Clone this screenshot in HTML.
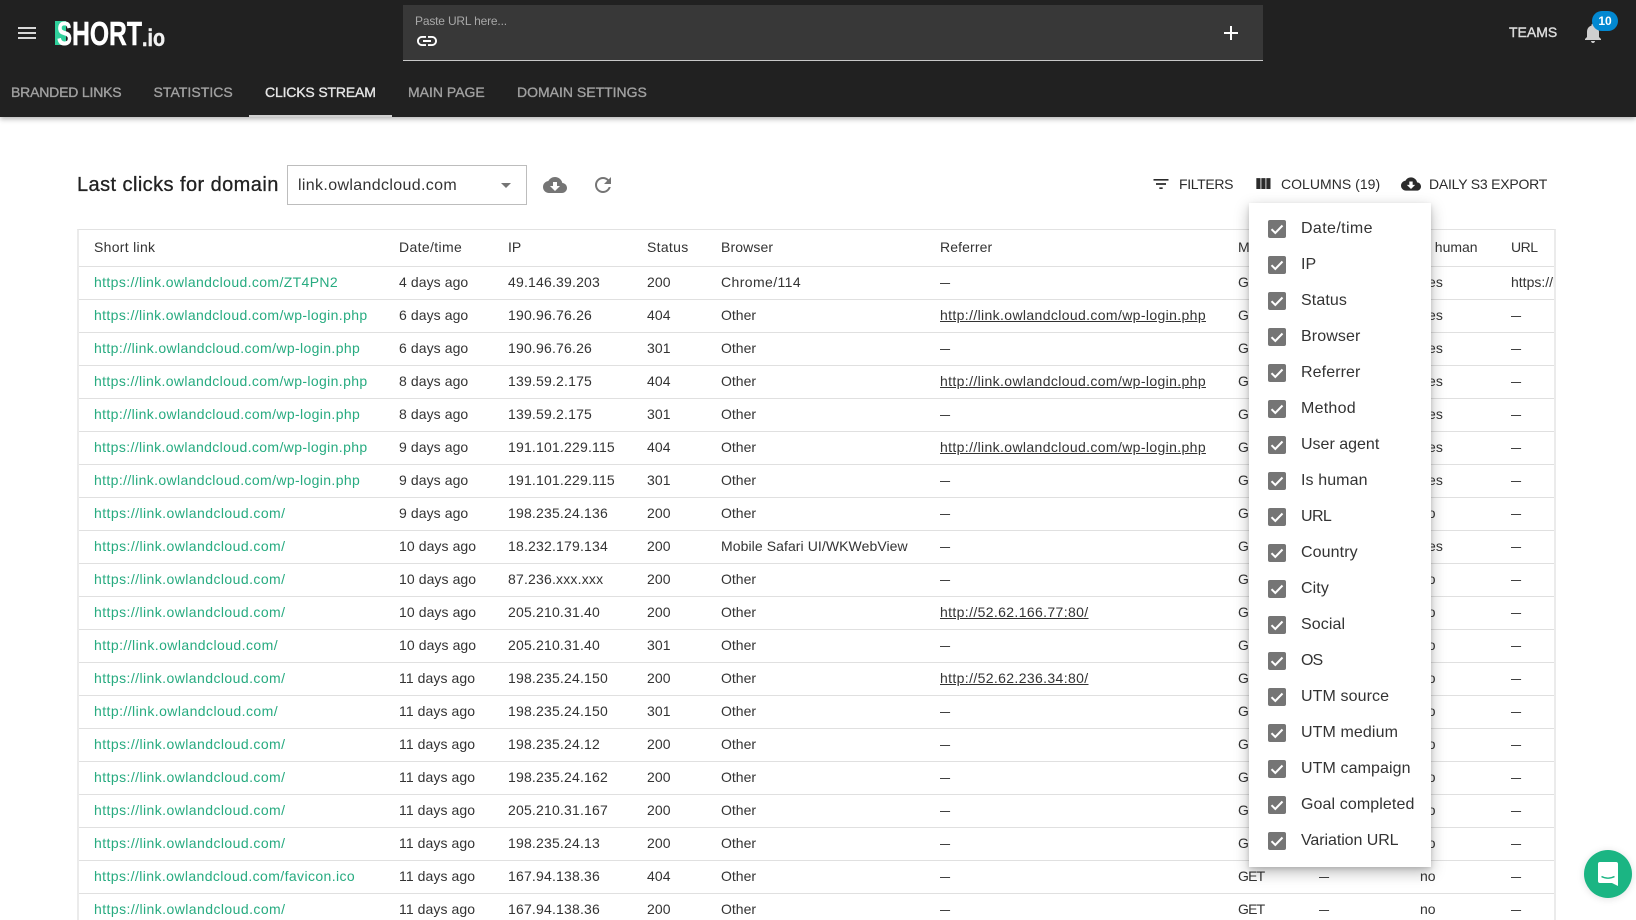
<!DOCTYPE html>
<html><head><meta charset="utf-8"><title>Clicks stream</title>
<style>
html,body{margin:0;padding:0;width:1636px;height:915px;overflow:hidden;background:#fff;font-family:"Liberation Sans",Arial,sans-serif;color:#333}
.abs,.tab,.tb,.cb,.lb{position:absolute}
#head{position:absolute;left:0;top:0;width:1636px;height:117px;background:#212121;box-shadow:0 2px 5px rgba(0,0,0,.3);z-index:3}
.tab{top:84px;font-size:14px;line-height:16px;font-weight:400;color:#a0a0a0;white-space:nowrap;-webkit-text-stroke:.35px #a0a0a0}
#search{position:absolute;left:403px;top:5px;width:860px;height:55px;background:#383838;border-bottom:1px solid #c8c8c8}
.tb{font-size:14px;line-height:16px;top:176px;white-space:nowrap;color:#2b2b2b}
#wrap{position:absolute;left:77px;top:229px;width:1475px;height:690px;border-style:solid;border-color:#e2e2e2 #ebebeb;overflow:hidden;border-width:1.5px 2px 0 2px}
table{border-collapse:collapse;table-layout:fixed;width:1477px;margin-left:-2px;font-size:14px;color:#333}
td,th{padding:0 0 2px;height:30px;border-bottom:1px solid #e0e0e0;text-align:left;font-weight:400;white-space:nowrap;overflow:hidden;line-height:16px;box-sizing:content-box}
th{height:33.5px}
td:first-child,th:first-child{padding-left:17px}
td:first-child{color:#27ab80;letter-spacing:.37px}
td.r:first-child{letter-spacing:.43px}
td:nth-child(2){letter-spacing:.08px}
td:nth-child(3){letter-spacing:.19px}
td:nth-child(4){letter-spacing:.1px}
td:nth-child(7){letter-spacing:-.8px}
th:nth-child(1){letter-spacing:.3px}
th:nth-child(2){letter-spacing:.36px}
th:nth-child(4){letter-spacing:.3px}
th:nth-child(5),th:nth-child(6){letter-spacing:.12px}
th:nth-child(10){letter-spacing:-.5px}
u{letter-spacing:.365px}
i{font-style:normal;display:inline-block;transform:scaleX(.72);transform-origin:0 50%;letter-spacing:0}
#dd{position:absolute;left:1249px;top:203px;width:182px;height:664px;background:#fff;box-shadow:0 5px 14px rgba(0,0,0,.28),0 2px 4px rgba(0,0,0,.12);z-index:2}
.cb{left:19px;width:18px;height:18px;background:#757575;border-radius:2px}
.cb svg{display:block}
.lb{left:52px;font-size:16px;line-height:20px;white-space:nowrap;color:#333;letter-spacing:.1px}
</style></head><body>
<div id="head">
<svg class="abs" style="left:15px;top:21px" width="24" height="24" viewBox="0 0 24 24"><path fill="#d8d8d8" d="M3 18h18v-2H3v2zm0-5h18v-2H3v2zm0-7v2h18V6H3z"/></svg>
<svg class="abs" style="left:50px;top:15px" width="125" height="36" viewBox="0 0 125 36">
<rect x="5" y="6" width="11" height="24" fill="#2fd09b"/>
<text x="7" y="30" font-family="Liberation Sans" font-weight="700" font-size="33" fill="#fff" stroke="#fff" stroke-width=".4" textLength="15" lengthAdjust="spacingAndGlyphs">S</text>
<text x="22" y="30" font-family="Liberation Sans" font-weight="700" font-size="33" fill="#fff" stroke="#fff" stroke-width=".5" textLength="70" lengthAdjust="spacingAndGlyphs">HORT</text>
<text x="92" y="31" font-family="Liberation Sans" font-weight="700" font-size="24" fill="#f0f0f0" stroke="#f0f0f0" stroke-width=".4" textLength="23" lengthAdjust="spacingAndGlyphs">.io</text>
</svg>
<div id="search"></div>
<div class="abs" style="left:415px;top:14px;font-size:12px;line-height:14px;color:#a8a8a8;letter-spacing:-.18px">Paste URL here...</div>
<svg class="abs" style="left:415px;top:29px" width="24" height="24" viewBox="0 0 24 24"><path fill="#fff" d="M3.9 12c0-1.71 1.39-3.1 3.1-3.1h4V7H7c-2.76 0-5 2.24-5 5s2.24 5 5 5h4v-1.9H7c-1.71 0-3.1-1.39-3.1-3.1zM8 13h8v-2H8v2zm9-6h-4v1.9h4c1.71 0 3.1 1.39 3.1 3.1s-1.39 3.1-3.1 3.1h-4V17h4c2.76 0 5-2.24 5-5s-2.24-5-5-5z"/></svg>
<svg class="abs" style="left:1219px;top:21px" width="24" height="24" viewBox="0 0 24 24"><path fill="#fff" d="M19 13h-6v6h-2v-6H5v-2h6V5h2v6h6v2z"/></svg>
<div class="tab" style="left:11px;letter-spacing:-.18px">BRANDED LINKS</div>
<div class="tab" style="left:153.5px;letter-spacing:.05px">STATISTICS</div>
<div class="tab" style="left:265px;color:#e6e6e6;-webkit-text-stroke:.35px #e6e6e6;letter-spacing:-.16px">CLICKS STREAM</div>
<div class="tab" style="left:408px">MAIN PAGE</div>
<div class="tab" style="left:517px">DOMAIN SETTINGS</div>
<div class="abs" style="left:249px;top:114.5px;width:143px;height:2.5px;background:#d0d0d0"></div>
<div class="tab" style="left:1509px;top:24px;color:#dcdcdc;-webkit-text-stroke:.4px #dcdcdc">TEAMS</div>
<svg class="abs" style="left:1581px;top:21px" width="24" height="24" viewBox="0 0 24 24"><path fill="#cfcfcf" d="M12 22c1.1 0 2-.9 2-2h-4c0 1.1.89 2 2 2zm6-6v-5c0-3.07-1.64-5.64-4.5-6.32V4c0-.83-.67-1.5-1.5-1.5s-1.5.67-1.5 1.5v.68C7.63 5.36 6 7.92 6 11v5l-2 2v1h16v-1l-2-2z"/></svg>
<div class="abs" style="left:1592px;top:11px;width:26px;height:20px;border-radius:10px;background:#0288d1;color:#fff;font-size:12px;font-weight:700;line-height:20px;text-align:center">10</div>
</div>

<div class="abs" style="left:77px;top:173px;font-size:20px;line-height:24px;color:#222;white-space:nowrap;letter-spacing:.43px;-webkit-text-stroke:.3px #222">Last clicks for domain</div>
<div class="abs" style="left:287px;top:165px;width:238px;height:38px;border:1px solid #bdbdbd"></div>
<div class="abs" style="left:298px;top:177px;font-size:16px;line-height:18px;color:#333;letter-spacing:.35px">link.owlandcloud.com</div>
<div class="abs" style="left:501px;top:183px;width:0;height:0;border-left:5px solid transparent;border-right:5px solid transparent;border-top:5px solid #757575"></div>
<svg class="abs" style="left:543px;top:173px" width="24" height="24" viewBox="0 0 24 24"><path fill="#757575" d="M19.35 10.04C18.67 6.59 15.64 4 12 4 9.11 4 6.6 5.64 5.35 8.04 2.34 8.36 0 10.91 0 14c0 3.31 2.69 6 6 6h13c2.76 0 5-2.24 5-5 0-2.64-2.05-4.78-4.65-4.96zM17 13l-5 5-5-5h3V9h4v4h3z"/></svg>
<svg class="abs" style="left:591px;top:173px" width="24" height="24" viewBox="0 0 24 24"><path fill="#757575" d="M17.65 6.35C16.2 4.9 14.21 4 12 4c-4.42 0-7.99 3.58-7.99 8s3.57 8 7.99 8c3.73 0 6.84-2.55 7.73-6h-2.08c-.82 2.33-3.04 4-5.65 4-3.31 0-6-2.69-6-6s2.69-6 6-6c1.66 0 3.14.69 4.22 1.78L13 11h7V4l-2.35 2.35z"/></svg>

<svg class="abs" style="left:1151px;top:174px" width="20" height="20" viewBox="0 0 24 24"><path fill="#2b2b2b" d="M10 18h4v-2h-4v2zM3 6v2h18V6H3zm3 7h12v-2H6v2z"/></svg>
<div class="tb" style="left:1179px;letter-spacing:-.35px">FILTERS</div>
<svg class="abs" style="left:1253px;top:174px" width="20" height="20" viewBox="0 0 24 24"><path fill="#2b2b2b" d="M10 18h5V5h-5v13zm-6 0h5V5H4v13zM16 5v13h5V5h-5z"/></svg>
<div class="tb" style="left:1281px;letter-spacing:.03px">COLUMNS (19)</div>
<svg class="abs" style="left:1401px;top:174px" width="20" height="20" viewBox="0 0 24 24"><path fill="#2b2b2b" d="M19.35 10.04C18.67 6.59 15.64 4 12 4 9.11 4 6.6 5.64 5.35 8.04 2.34 8.36 0 10.91 0 14c0 3.31 2.69 6 6 6h13c2.76 0 5-2.24 5-5 0-2.64-2.05-4.78-4.65-4.96zM17 13l-5 5-5-5h3V9h4v4h3z"/></svg>
<div class="tb" style="left:1429px;letter-spacing:-.22px">DAILY S3 EXPORT</div>

<div id="wrap"><table>
<colgroup><col style="width:322px"><col style="width:109px"><col style="width:139px"><col style="width:74px"><col style="width:219px"><col style="width:298px"><col style="width:81px"><col style="width:101px"><col style="width:91px"><col style="width:43px"></colgroup>
<tr><th>Short link</th><th>Date/time</th><th>IP</th><th>Status</th><th>Browser</th><th>Referrer</th><th>Method</th><th>User agent</th><th>Is human</th><th>URL</th></tr>
<tr><td>https://link.owlandcloud.com/ZT4PN2</td><td>4 days ago</td><td>49.146.39.203</td><td>200</td><td style="letter-spacing:.4px">Chrome/114</td><td><i>—</i></td><td>GET</td><td><i>—</i></td><td>Yes</td><td>https://link.owlandcloud.com</td></tr>
<tr><td>https://link.owlandcloud.com/wp-login.php</td><td>6 days ago</td><td>190.96.76.26</td><td>404</td><td>Other</td><td><u>http://link.owlandcloud.com/wp-login.php</u></td><td>GET</td><td><i>—</i></td><td>Yes</td><td><i>—</i></td></tr>
<tr><td>http://link.owlandcloud.com/wp-login.php</td><td>6 days ago</td><td>190.96.76.26</td><td>301</td><td>Other</td><td><i>—</i></td><td>GET</td><td><i>—</i></td><td>Yes</td><td><i>—</i></td></tr>
<tr><td>https://link.owlandcloud.com/wp-login.php</td><td>8 days ago</td><td>139.59.2.175</td><td>404</td><td>Other</td><td><u>http://link.owlandcloud.com/wp-login.php</u></td><td>GET</td><td><i>—</i></td><td>Yes</td><td><i>—</i></td></tr>
<tr><td>http://link.owlandcloud.com/wp-login.php</td><td>8 days ago</td><td>139.59.2.175</td><td>301</td><td>Other</td><td><i>—</i></td><td>GET</td><td><i>—</i></td><td>Yes</td><td><i>—</i></td></tr>
<tr><td>https://link.owlandcloud.com/wp-login.php</td><td>9 days ago</td><td>191.101.229.115</td><td>404</td><td>Other</td><td><u>http://link.owlandcloud.com/wp-login.php</u></td><td>GET</td><td><i>—</i></td><td>Yes</td><td><i>—</i></td></tr>
<tr><td>http://link.owlandcloud.com/wp-login.php</td><td>9 days ago</td><td>191.101.229.115</td><td>301</td><td>Other</td><td><i>—</i></td><td>GET</td><td><i>—</i></td><td>Yes</td><td><i>—</i></td></tr>
<tr><td class="r">https://link.owlandcloud.com/</td><td>9 days ago</td><td>198.235.24.136</td><td>200</td><td>Other</td><td><i>—</i></td><td>GET</td><td><i>—</i></td><td>no</td><td><i>—</i></td></tr>
<tr><td class="r">https://link.owlandcloud.com/</td><td>10 days ago</td><td>18.232.179.134</td><td>200</td><td style="letter-spacing:.08px">Mobile Safari UI/WKWebView</td><td><i>—</i></td><td>GET</td><td><i>—</i></td><td>Yes</td><td><i>—</i></td></tr>
<tr><td class="r">https://link.owlandcloud.com/</td><td>10 days ago</td><td>87.236.xxx.xxx</td><td>200</td><td>Other</td><td><i>—</i></td><td>GET</td><td><i>—</i></td><td>no</td><td><i>—</i></td></tr>
<tr><td class="r">https://link.owlandcloud.com/</td><td>10 days ago</td><td>205.210.31.40</td><td>200</td><td>Other</td><td><u>http://52.62.166.77:80/</u></td><td>GET</td><td><i>—</i></td><td>no</td><td><i>—</i></td></tr>
<tr><td class="r">http://link.owlandcloud.com/</td><td>10 days ago</td><td>205.210.31.40</td><td>301</td><td>Other</td><td><i>—</i></td><td>GET</td><td><i>—</i></td><td>no</td><td><i>—</i></td></tr>
<tr><td class="r">https://link.owlandcloud.com/</td><td>11 days ago</td><td>198.235.24.150</td><td>200</td><td>Other</td><td><u>http://52.62.236.34:80/</u></td><td>GET</td><td><i>—</i></td><td>no</td><td><i>—</i></td></tr>
<tr><td class="r">http://link.owlandcloud.com/</td><td>11 days ago</td><td>198.235.24.150</td><td>301</td><td>Other</td><td><i>—</i></td><td>GET</td><td><i>—</i></td><td>no</td><td><i>—</i></td></tr>
<tr><td class="r">https://link.owlandcloud.com/</td><td>11 days ago</td><td>198.235.24.12</td><td>200</td><td>Other</td><td><i>—</i></td><td>GET</td><td><i>—</i></td><td>no</td><td><i>—</i></td></tr>
<tr><td class="r">https://link.owlandcloud.com/</td><td>11 days ago</td><td>198.235.24.162</td><td>200</td><td>Other</td><td><i>—</i></td><td>GET</td><td><i>—</i></td><td>no</td><td><i>—</i></td></tr>
<tr><td class="r">https://link.owlandcloud.com/</td><td>11 days ago</td><td>205.210.31.167</td><td>200</td><td>Other</td><td><i>—</i></td><td>GET</td><td><i>—</i></td><td>no</td><td><i>—</i></td></tr>
<tr><td class="r">https://link.owlandcloud.com/</td><td>11 days ago</td><td>198.235.24.13</td><td>200</td><td>Other</td><td><i>—</i></td><td>GET</td><td><i>—</i></td><td>no</td><td><i>—</i></td></tr>
<tr><td style="letter-spacing:.4px">https://link.owlandcloud.com/favicon.ico</td><td>11 days ago</td><td>167.94.138.36</td><td>404</td><td>Other</td><td><i>—</i></td><td>GET</td><td><i>—</i></td><td>no</td><td><i>—</i></td></tr>
<tr><td class="r">https://link.owlandcloud.com/</td><td>11 days ago</td><td>167.94.138.36</td><td>200</td><td>Other</td><td><i>—</i></td><td>GET</td><td><i>—</i></td><td>no</td><td><i>—</i></td></tr>
</table></div>

<div id="dd">
<div class="cb" style="top:17px"><svg width="18" height="18" viewBox="0 0 18 18"><path fill="none" stroke="#fff" stroke-width="2" d="M3.5 9.2l3.8 3.8 7.2-7.5"/></svg></div><div class="lb" style="top:16px;letter-spacing:.38px">Date/time</div>
<div class="cb" style="top:53px"><svg width="18" height="18" viewBox="0 0 18 18"><path fill="none" stroke="#fff" stroke-width="2" d="M3.5 9.2l3.8 3.8 7.2-7.5"/></svg></div><div class="lb" style="top:52px">IP</div>
<div class="cb" style="top:89px"><svg width="18" height="18" viewBox="0 0 18 18"><path fill="none" stroke="#fff" stroke-width="2" d="M3.5 9.2l3.8 3.8 7.2-7.5"/></svg></div><div class="lb" style="top:88px">Status</div>
<div class="cb" style="top:125px"><svg width="18" height="18" viewBox="0 0 18 18"><path fill="none" stroke="#fff" stroke-width="2" d="M3.5 9.2l3.8 3.8 7.2-7.5"/></svg></div><div class="lb" style="top:124px">Browser</div>
<div class="cb" style="top:161px"><svg width="18" height="18" viewBox="0 0 18 18"><path fill="none" stroke="#fff" stroke-width="2" d="M3.5 9.2l3.8 3.8 7.2-7.5"/></svg></div><div class="lb" style="top:160px">Referrer</div>
<div class="cb" style="top:197px"><svg width="18" height="18" viewBox="0 0 18 18"><path fill="none" stroke="#fff" stroke-width="2" d="M3.5 9.2l3.8 3.8 7.2-7.5"/></svg></div><div class="lb" style="top:196px;letter-spacing:.25px">Method</div>
<div class="cb" style="top:233px"><svg width="18" height="18" viewBox="0 0 18 18"><path fill="none" stroke="#fff" stroke-width="2" d="M3.5 9.2l3.8 3.8 7.2-7.5"/></svg></div><div class="lb" style="top:232px;letter-spacing:0">User agent</div>
<div class="cb" style="top:269px"><svg width="18" height="18" viewBox="0 0 18 18"><path fill="none" stroke="#fff" stroke-width="2" d="M3.5 9.2l3.8 3.8 7.2-7.5"/></svg></div><div class="lb" style="top:268px">Is human</div>
<div class="cb" style="top:305px"><svg width="18" height="18" viewBox="0 0 18 18"><path fill="none" stroke="#fff" stroke-width="2" d="M3.5 9.2l3.8 3.8 7.2-7.5"/></svg></div><div class="lb" style="top:304px;letter-spacing:-.6px">URL</div>
<div class="cb" style="top:341px"><svg width="18" height="18" viewBox="0 0 18 18"><path fill="none" stroke="#fff" stroke-width="2" d="M3.5 9.2l3.8 3.8 7.2-7.5"/></svg></div><div class="lb" style="top:340px">Country</div>
<div class="cb" style="top:377px"><svg width="18" height="18" viewBox="0 0 18 18"><path fill="none" stroke="#fff" stroke-width="2" d="M3.5 9.2l3.8 3.8 7.2-7.5"/></svg></div><div class="lb" style="top:376px">City</div>
<div class="cb" style="top:413px"><svg width="18" height="18" viewBox="0 0 18 18"><path fill="none" stroke="#fff" stroke-width="2" d="M3.5 9.2l3.8 3.8 7.2-7.5"/></svg></div><div class="lb" style="top:412px">Social</div>
<div class="cb" style="top:449px"><svg width="18" height="18" viewBox="0 0 18 18"><path fill="none" stroke="#fff" stroke-width="2" d="M3.5 9.2l3.8 3.8 7.2-7.5"/></svg></div><div class="lb" style="top:448px;letter-spacing:-.9px">OS</div>
<div class="cb" style="top:485px"><svg width="18" height="18" viewBox="0 0 18 18"><path fill="none" stroke="#fff" stroke-width="2" d="M3.5 9.2l3.8 3.8 7.2-7.5"/></svg></div><div class="lb" style="top:484px">UTM source</div>
<div class="cb" style="top:521px"><svg width="18" height="18" viewBox="0 0 18 18"><path fill="none" stroke="#fff" stroke-width="2" d="M3.5 9.2l3.8 3.8 7.2-7.5"/></svg></div><div class="lb" style="top:520px">UTM medium</div>
<div class="cb" style="top:557px"><svg width="18" height="18" viewBox="0 0 18 18"><path fill="none" stroke="#fff" stroke-width="2" d="M3.5 9.2l3.8 3.8 7.2-7.5"/></svg></div><div class="lb" style="top:556px">UTM campaign</div>
<div class="cb" style="top:593px"><svg width="18" height="18" viewBox="0 0 18 18"><path fill="none" stroke="#fff" stroke-width="2" d="M3.5 9.2l3.8 3.8 7.2-7.5"/></svg></div><div class="lb" style="top:592px">Goal completed</div>
<div class="cb" style="top:629px"><svg width="18" height="18" viewBox="0 0 18 18"><path fill="none" stroke="#fff" stroke-width="2" d="M3.5 9.2l3.8 3.8 7.2-7.5"/></svg></div><div class="lb" style="top:628px;letter-spacing:-.07px">Variation URL</div>
</div>

<div class="abs" style="left:1584px;top:850px;width:48px;height:48px;border-radius:50%;background:#1bb583;box-shadow:0 1px 8px rgba(0,0,0,.12);z-index:4">
<svg width="48" height="48" viewBox="0 0 48 48"><path fill="#fff" d="M16 12h16a2 2 0 0 1 2 2v22l-6-3H16a2 2 0 0 1-2-2V14a2 2 0 0 1 2-2z"/><path fill="none" stroke="#1bb583" stroke-width="1.4" d="M17.5 26.5c4 2.2 9 2.2 13 0"/></svg>
</div>
</body></html>
